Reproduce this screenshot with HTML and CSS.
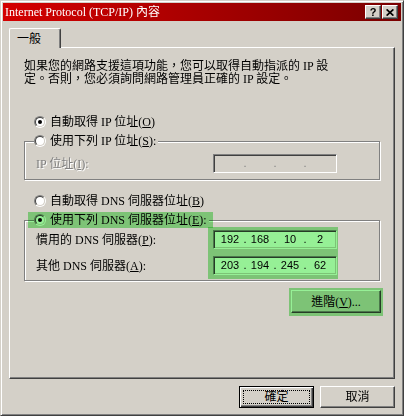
FILE: index.html
```html
<!DOCTYPE html>
<html lang="zh-Hant">
<head>
<meta charset="utf-8">
<title>Internet Protocol (TCP/IP) 內容</title>
<link rel="stylesheet" href="styles.css">
</head>
<body>
<div class="window">
  <div class="titlebar">
    <span class="title">Internet Protocol (TCP/IP) 內容</span>
    <div class="caps">
      <span class="cap">?</span>
      <span class="cap"><svg width="8" height="7" viewBox="0 0 8 7"><path d="M0.6 0.4L7.4 6.6M7.4 0.4L0.6 6.6" stroke="#000" stroke-width="1.7"/></svg></span>
    </div>
  </div>
  <div class="main">
    <div class="tabs"><div class="tab">一般</div></div>
    <div class="panel">
      <p class="intro">如果您的網路支援這項功能，您可以取得自動指派的 IP 設<br>定。否則，您必須詢問網路管理員正確的 IP 設定。</p>

      <div class="radio r1"><span class="rb on"></span><span>自動取得 IP 位址(<u>O</u>)</span></div>

      <div class="group g1">
        <div class="radio legend"><span class="rb"></span><span>使用下列 IP 位址(<u>S</u>):</span></div>
        <div class="row">
          <span class="lbl dis">IP 位址(<u>I</u>):</span>
          <div class="ipf off">
            <span class="seg"></span><span class="sep">.</span><span class="seg"></span><span class="sep">.</span><span class="seg"></span><span class="sep">.</span><span class="seg"></span>
          </div>
        </div>
      </div>

      <div class="radio r3"><span class="rb"></span><span>自動取得 DNS 伺服器位址(<u>B</u>)</span></div>

      <div class="group g2">
        <div class="radio legend hl hl-leg"><span class="rb on"></span><span>使用下列 DNS 伺服器位址(<u>E</u>):</span></div>
        <div class="dns">
          <div class="labels">
            <span class="lbl">慣用的 DNS 伺服器(<u>P</u>):</span>
            <span class="lbl">其他 DNS 伺服器(<u>A</u>):</span>
          </div>
          <div class="fields hl hl-fields">
            <div class="ipf">
              <span class="seg">192</span><span class="sep">.</span><span class="seg">168</span><span class="sep">.</span><span class="seg">10</span><span class="sep">.</span><span class="seg">2</span>
            </div>
            <div class="ipf">
              <span class="seg">203</span><span class="sep">.</span><span class="seg">194</span><span class="sep">.</span><span class="seg">245</span><span class="sep">.</span><span class="seg">62</span>
            </div>
          </div>
        </div>
      </div>

      <div class="advwrap"><button class="btn adv hl hl-btn">進階(<u>V</u>)...</button></div>
    </div>
    <div class="footer">
      <button class="btn def">確定</button>
      <button class="btn">取消</button>
    </div>
  </div>
</div>
</body>
</html>
```
FILE: styles.css
```css
* { box-sizing: border-box; }
html, body { margin: 0; padding: 0; }
body {
  width: 404px;
  height: 416px;
  overflow: hidden;
  background: #d4d0c8;
  color: #000;
  font: 12px/16px "Liberation Serif", "Noto Sans CJK TC", serif;
}
u { text-decoration: underline; text-underline-offset: 1px; }

.window {
  width: 404px;
  height: 416px;
  background: #d4d0c8;
  border: 1px solid;
  border-color: #d4d0c8 #404040 #404040 #d4d0c8;
  box-shadow: inset 1px 1px #fff, inset -1px -1px #808080;
  padding: 2px;
  display: flex;
  flex-direction: column;
}

.titlebar {
  height: 18px;
  display: flex;
  align-items: center;
  padding: 0 3px 0 2px;
  background: linear-gradient(to right, #d40000, #7a0000);
  color: #fff;
}
.title { white-space: nowrap; }
.caps { margin-left: auto; display: flex; gap: 1px; }
.cap {
  width: 16px;
  height: 14px;
  background: #d4d0c8;
  border: 1px solid;
  border-color: #fff #404040 #404040 #fff;
  box-shadow: inset -1px -1px #808080;
  display: flex;
  align-items: center;
  justify-content: center;
  color: #000;
  font: bold 11px/1 "Liberation Sans", sans-serif;
}

.main {
  padding: 7px 6px 0;
  display: flex;
  flex-direction: column;
}
.tabs {
  display: flex;
  height: 20px;
  margin-bottom: -1px;
  position: relative;
  z-index: 1;
}
.tab {
  width: 52px;
  height: 20px;
  background: #d4d0c8;
  border-left: 1px solid #fff;
  border-top: 1px solid #fff;
  border-right: 1px solid #404040;
  box-shadow: inset -1px 0 #808080;
  border-radius: 2px 2px 0 0;
  padding-left: 7px;
  display: flex;
  align-items: center;
}

.panel {
  height: 332px;
  border: 1px solid;
  border-color: #fff #404040 #404040 #fff;
  box-shadow: inset -1px -1px #808080;
  padding: 12px 13px 0 14px;
  display: flex;
  flex-direction: column;
}
.intro { margin: 0; line-height: 13px; white-space: nowrap; }

.radio {
  display: flex;
  align-items: center;
  gap: 4px;
  height: 16px;
  white-space: nowrap;
}
.r1 { margin-top: 28px; padding-left: 10px; }
.r3 { margin-top: 13px; padding-left: 10px; }

.rb {
  position: relative;
  flex: none;
  width: 12px;
  height: 12px;
  border-radius: 50%;
  border: 1px solid;
  border-color: #808080 #fff #fff #808080;
}
.rb::before {
  content: "";
  position: absolute;
  inset: 0;
  border-radius: 50%;
  border: 1px solid;
  border-color: #404040 #d4d0c8 #d4d0c8 #404040;
  background: #fff;
}
.rb.on::after {
  content: "";
  position: absolute;
  left: 3px;
  top: 3px;
  width: 4px;
  height: 4px;
  border-radius: 50%;
  background: #000;
}

.group {
  width: 356px;
  border: 1px solid #808080;
  box-shadow: inset 1px 1px #fff, 1px 1px #fff;
  display: flex;
  flex-direction: column;
}
.g1 { margin-top: 11px; padding-bottom: 6px; }
.g2 { margin-top: 11px; padding-bottom: 5px; }
.legend {
  align-self: flex-start;
  margin: -9px 0 0 9px;
  padding-right: 2px;
  background: #d4d0c8;
}

.row {
  margin: 5px 42px 0 11px;
  height: 19px;
  display: flex;
  align-items: center;
  justify-content: space-between;
}
.lbl { white-space: nowrap; }
.dis { color: #808080; text-shadow: 1px 1px 0 #fff; }

.dns {
  margin: 2px 42px 0 11px;
  display: flex;
  justify-content: space-between;
}
.labels, .fields {
  display: flex;
  flex-direction: column;
  gap: 7px;
}
.labels .lbl { height: 19px; display: flex; align-items: center; }

.ipf {
  width: 124px;
  height: 19px;
  background: #fff;
  border: 1px solid;
  border-color: #808080 #fff #fff #808080;
  box-shadow: inset 1px 1px #404040, inset -1px -1px #d4d0c8;
  padding-left: 4px;
  display: flex;
  font: 11px/17px "Liberation Sans", Arial, sans-serif;
}
.ipf.off { background: #d4d0c8; color: #808080; }
.seg { width: 24px; text-align: center; }
.sep { width: 6px; text-align: center; }

.advwrap {
  margin-top: 9px;
  display: flex;
  justify-content: flex-end;
}

.btn {
  width: 75px;
  height: 22px;
  padding: 0;
  margin: 0;
  background: #d4d0c8;
  color: #000;
  font: 12px/16px "Liberation Serif", "Noto Sans CJK TC", serif;
  border: 1px solid;
  border-color: #fff #404040 #404040 #fff;
  box-shadow: inset -1px -1px #808080;
}
.adv { width: 90px; height: 23px; }
.def {
  position: relative;
  border-color: #000;
  box-shadow: inset 1px 1px #fff, inset -1px -1px #404040, inset -2px -2px #808080;
}
.def::after {
  content: "";
  position: absolute;
  inset: 3px;
  border: 1px dotted #000;
}

.footer {
  margin-top: 7px;
  display: flex;
  justify-content: flex-end;
  gap: 6px;
}

.hl { position: relative; isolation: auto; }
.hl::after {
  content: "";
  position: absolute;
  background: #96f096;
  mix-blend-mode: multiply;
  pointer-events: none;
}
.hl-leg::after { inset: 0 -4px 0 -6px; }
.hl-fields::after { inset: -3px -1px -4px -5px; }
.hl-btn::after { inset: -3px -3px -4px -3px; }
```
